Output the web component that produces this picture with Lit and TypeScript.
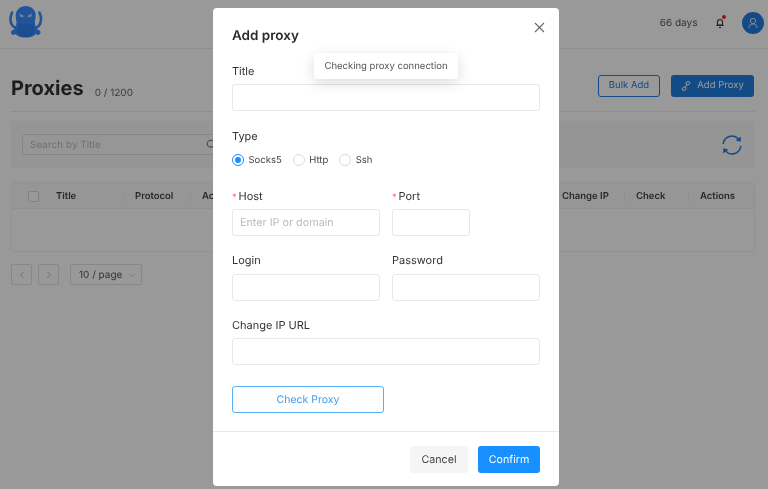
import { LitElement, html, css, svg } from "lit";
import { customElement } from "lit/decorators.js";

const logo = svg`<svg class="logo" viewBox="0 0 36 36" width="36" height="36">
  <g fill="none" stroke="#3a8dff" stroke-linecap="round">
    <path stroke-width="2.600" d="M4 7.500C1.500 13 2 19 6 22c3 1.500 5.500-.5 6-4"/>
    <path stroke-width="2.600" d="M31.500 7.500c2.500 5.500 2 11.500-2 14.500-3 1.500-5.500-.5-6-4"/>
    <path stroke-width="5" d="M11 19c-.5 4.500-2.500 7.500-5.500 8.500"/>
    <path stroke-width="5" d="M24.500 19c.5 4.500 2.500 7.500 5.500 8.500"/>
  </g>
  <path fill="#3a8dff" d="M17.700 1C23.500 1 27.500 5 27.700 10c.1 4-1 6-1 9 0 3 1.500 5 1.500 8 0 3.500-4.500 5.500-10.500 5.500S7.200 30.500 7.200 27c0-3 1.500-5 1.500-8 0-3-1.100-5-1-9C8 5 12 1 17.700 1z"/>
  <path fill="#3080f0" d="M11 18c4 2 9.500 2 13.500 0l2 9c-1.500 3-5 5-8.800 5S10.500 30 9 27z"/>
  <path fill="#c8dcf8" d="M11.500 8.500l4.600 2.500c-.4 1.300-2.800 1.500-3.800.6-.5-.6-.8-1.900-.8-3.100zM23.900 8.500l-4.600 2.500c.4 1.300 2.800 1.500 3.800.6.500-.6.800-1.900.8-3.100z"/>
</svg>`;

@customElement("app-root")
export class AppRoot extends LitElement {
  static styles = css`
    :host { display: block; position: relative; width: 768px; height: 489px; overflow: hidden; background: #fff;
      font-family: Inter, "Liberation Sans", sans-serif; color: #333; text-rendering: geometricPrecision; }
    * { box-sizing: border-box; }
    .page { height: 489px; background: #fff; filter: blur(0.45px); }
    .head { height: 49px; border-bottom: 1px solid #ececec; display: flex; align-items: center; padding: 0 4.500px 0 8px; }
    .logo { display: block; margin-top: -2px; }
    .spacer { flex: 1; }
    .days { font-size: 10px; color: #555; margin: 0 18px 2px 0; }
    .bell { position: relative; width: 8px; height: 10px; margin: 0 18px 2px 0; }
    .bell svg { display: block; }
    .bell i { position: absolute; top: -3px; right: -2px; width: 4px; height: 4px; border-radius: 50%; background: #f5222d; }
    .avatar { width: 22px; height: 22px; border-radius: 50%; background: #1e7ee0; display: flex; align-items: center; justify-content: center; margin-top: -3px; }
    .titlebar { margin: 0 13px 0 11px; height: 63px; border-bottom: 1px solid #ececec; display: flex; align-items: center; padding-top: 15px; }
    .titlebar h1 { margin: 0; font-size: 20px; line-height: 28px; font-weight: 700; color: #333; }
    .count { font-size: 10px; color: #666; margin: 11px 0 0 11px; }
    .btn { height: 22px; border-radius: 3px; font-size: 9.500px; display: flex; align-items: center; justify-content: center; margin-bottom: 4px; letter-spacing: .02px; }
    .bulk { width: 62px; border: 1px solid #1e7ee0; color: #1e7ee0; background: #fff; margin-right: 11px; }
    .add { width: 83px; background: #1e7ee0; color: #fff; gap: 6px; margin-right: 1px; }
    .filter { margin: 9px 13px 0 11px; height: 47px; background: #f8f8f8; display: flex; align-items: center; padding: 0 11px; justify-content: space-between; }
    .search { width: 200px; height: 21px; border: 1px solid #e0e0e0; border-radius: 3px; background: #fbfbfb; font-size: 10px; color: #bbb; display: flex; align-items: center; padding: 0 7px; position: relative; }
    .search svg { position: absolute; left: 183px; top: 4px; }
    .refresh { margin-right: 1px; display: block; }
    .table { margin: 14px 13px 0 11px; height: 70px; border: 1px solid #f2f2f2; border-radius: 3px; }
    .thead { height: 26px; padding-top: 1px; background: #fafafa; border-bottom: 1px solid #f0f0f0; display: grid; grid-template-columns: 112px 67px 1fr 74px 64px 65px; align-items: center; font-size: 9.500px; font-weight: 600; color: #444; white-space: nowrap; }
    .thead > div { padding-left: 11px; border-right: 1px solid #f0f0f0; height: 13px; line-height: 13px; }
    .thead > div:last-child { border-right: 0; }
    .thead > .first { padding-left: 16px; display: flex; gap: 17px; align-items: center; }
    .check { width: 11px; height: 11px; border: 1px solid #d9d9d9; border-radius: 2px; background: #fff; }
    .pager { margin: 12px 0 0 11px; display: flex; gap: 6px; }
    .pg { width: 21px; height: 21px; border: 1px solid #e2e2e2; border-radius: 2px; display: flex; align-items: center; justify-content: center; }
    .size { margin-left: 5px; width: 72px; height: 21px; border: 1px solid #e2e2e2; border-radius: 2px; font-size: 10px; color: #555; display: flex; align-items: center; gap: 6px; padding-left: 8px; }
    .mask { position: absolute; inset: 0; background: rgba(0, 0, 0, 0.4); }
    .modal { position: absolute; left: 213px; top: 8px; width: 346px; height: 478px; background: #fff; border-radius: 4px; padding: 0 19px; filter: blur(0.25px); }
    .modal h2 { margin: 19px 0 0; font-size: 13.500px; line-height: 18px; font-weight: 600; color: #2b2b2b; }
    .close { position: absolute; left: 321px; top: 14px; display: block; }
    label { display: block; font-size: 11px; line-height: 14px; color: #333; }
    label b { color: #ff6b6b; font-weight: 400; margin-right: 2px; font-size: 9px; line-height: 0; }
    .field { height: 27px; border: 1px solid #e8e8e8; border-radius: 3px; margin-top: 6px; background: #fff; font-size: 10.800px; color: #bcbcbc; padding-left: 7px; line-height: 25px; }
    .field.low { margin-top: 7px; }
    .l1 { margin-top: 19px; }
    .gap { margin-top: 18px; }
    .radios { display: flex; align-items: center; font-size: 9.500px; color: #444; margin-top: 10px; height: 14px; }
    .radio { width: 12px; height: 12px; border-radius: 50%; border: 1px solid #dcdcdc; margin-right: 4.500px; }
    .radio.on { border-color: #1890ff; position: relative; }
    .radio.on::after { content: ""; position: absolute; inset: 2px; border-radius: 50%; background: #1890ff; }
    .radios span { margin-right: 11px; }
    .row { display: flex; gap: 12px; }
    .hostrow { margin-top: 22px; }
    .loginrow { margin-top: 17px; }
    .changeurl { margin-top: 17px; }
    .w148 { width: 148px; }
    .w78 { width: 78px; }
    .check-proxy { margin-top: 21px; width: 152px; height: 27px; border: 1px solid #5aaef5; border-radius: 3px; color: #3d9bf0; font-size: 10.500px; display: flex; align-items: center; justify-content: center; }
    .foot { margin: 18px -19px 0; border-top: 1px solid #e8e8e8; padding: 14px 19px 0; display: flex; justify-content: flex-end; gap: 10px; }
    .foot div { height: 27px; border-radius: 3px; font-size: 10.700px; display: flex; align-items: center; justify-content: center; }
    .cancel { width: 58px; background: #f5f5f5; color: #444; }
    .confirm { width: 62px; background: #1890ff; color: #fff; }
    .toast { position: absolute; left: 314px; top: 53px; width: 144px; height: 26px; background: #fff; border-radius: 2px; box-shadow: 0 4px 14px rgba(0,0,0,.14); font-size: 9.500px; color: #555; display: flex; align-items: center; justify-content: center; filter: blur(0.25px); }
  `;

  render() {
    return html`
      <div class="page">
        <div class="head">
          ${logo}
          <div class="spacer"></div>
          <span class="days">66 days</span>
          <div class="bell">
            <svg width="8" height="10" viewBox="0 0 8 10" fill="none" stroke="#333" stroke-width="1.100"><path d="M1.500 7V4a2.500 2.500 0 0 1 5 0v3zM.5 7.500h7M3 9.500h2"/></svg>
            <i></i>
          </div>
          <div class="avatar"><svg width="12" height="12" viewBox="0 0 12 12" fill="none" stroke="#dfeaf8" stroke-width="1"><circle cx="6" cy="4" r="2.600"/><path d="M2 11c0-2.500 1.500-4 4-4s4 1.500 4 4"/></svg></div>
        </div>
        <div class="titlebar">
          <h1>Proxies</h1><span class="count">0 / 1200</span>
          <div class="spacer"></div>
          <div class="btn bulk">Bulk Add</div>
          <div class="btn add"><svg width="10" height="10" viewBox="0 0 11 11" fill="none" stroke="#fff" stroke-width="1"><rect x="5.500" y="1" width="4" height="3" rx="1" transform="rotate(-35 7.500 2.500)"/><rect x="1.500" y="7" width="4" height="3" rx="1" transform="rotate(-35 3.500 8.500)"/><path d="M4 7l3-3"/></svg>Add Proxy</div>
        </div>
        <div class="filter">
          <div class="search">Search by Title<svg width="11" height="11" viewBox="0 0 11 11" fill="none" stroke="#777" stroke-width="1.100"><circle cx="4.700" cy="4.700" r="3.400"/><path d="M7.200 7.200l2.500 2.500"/></svg></div>
          <svg class="refresh" width="22" height="22" viewBox="0 0 22 22" fill="none" stroke="#1e7ee0" stroke-width="1.500"><path d="M2.200 10A8.800 8.800 0 0 1 17.500 5"/><path d="M19.800 12A8.800 8.800 0 0 1 4.500 17"/><path fill="#1e7ee0" stroke="none" d="M20 2.500l-.4 5.200-5-1.200zM2 19.500l.4-5.200 5 1.200z"/></svg>
        </div>
        <div class="table">
          <div class="thead">
            <div class="first"><span class="check"></span>Title</div>
            <div>Protocol</div><div>Ac</div><div>Change IP</div><div>Check</div><div>Actions</div>
          </div>
        </div>
        <div class="pager">
          <div class="pg"><svg width="8" height="8" viewBox="0 0 8 8" fill="none" stroke="#bbb"><path d="M5.500 1L2.500 4l3 3"/></svg></div>
          <div class="pg"><svg width="8" height="8" viewBox="0 0 8 8" fill="none" stroke="#bbb"><path d="M2.500 1l3 3-3 3"/></svg></div>
          <div class="size">10 / page <svg width="8" height="8" viewBox="0 0 8 8" fill="none" stroke="#ccc"><path d="M1 2.500l3 3 3-3"/></svg></div>
        </div>
      </div>
      <div class="mask"></div>
      <div class="modal">
        <h2>Add proxy</h2>
        <svg class="close" width="11" height="11" viewBox="0 0 11 11" stroke="#666" stroke-width="1.100"><path d="M1 1l9 9M10 1l-9 9"/></svg>
        <label class="l1">Title</label>
        <div class="field"></div>
        <label class="gap">Type</label>
        <div class="radios">
          <i class="radio on"></i><span>Socks5</span>
          <i class="radio"></i><span>Http</span>
          <i class="radio"></i><span>Ssh</span>
        </div>
        <div class="row hostrow">
          <div class="w148"><label><b>*</b>Host</label><div class="field">Enter IP or domain</div></div>
          <div class="w78"><label><b>*</b>Port</label><div class="field"></div></div>
        </div>
        <div class="row loginrow">
          <div class="w148"><label>Login</label><div class="field low"></div></div>
          <div class="w148"><label>Password</label><div class="field low"></div></div>
        </div>
        <label class="changeurl">Change IP URL</label>
        <div class="field"></div>
        <div class="check-proxy">Check Proxy</div>
        <div class="foot"><div class="cancel">Cancel</div><div class="confirm">Confirm</div></div>
      </div>
      <div class="toast">Checking proxy connection</div>
    `;
  }
}
